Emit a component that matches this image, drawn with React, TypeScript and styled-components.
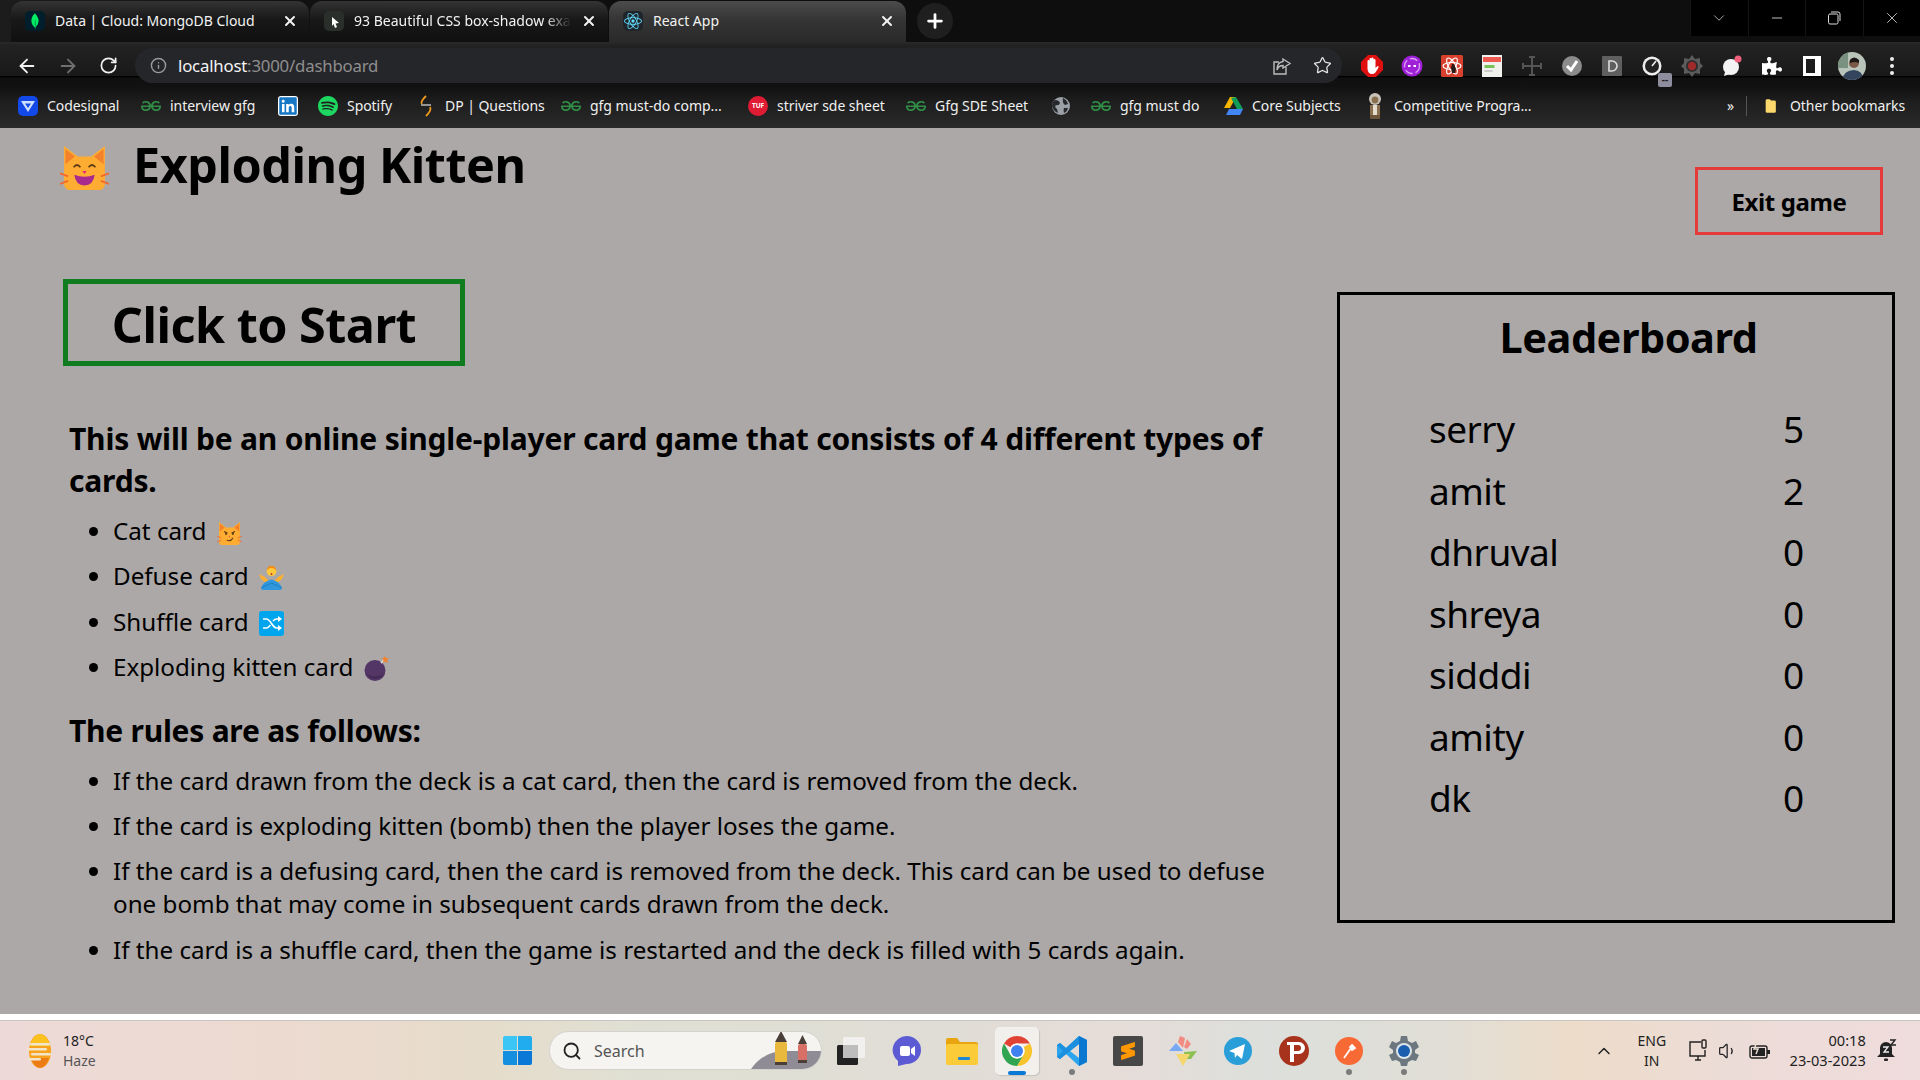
import React from "react";
import styled, { createGlobalStyle } from "styled-components";
import { ArrowLeft, ArrowRight, RotateCw, Info, Star, X, Plus, Minus, ChevronDown, ChevronUp, Search, Volume1 } from "lucide-react";
import { SiMongodb, SiReact, SiSpotify, SiGeeksforgeeks, SiSublimetext } from "react-icons/si";
import { FaLinkedin, FaPuzzlePiece } from "react-icons/fa";

const FONT = `"Noto Sans", "Open Sans", "Liberation Sans", sans-serif`;

const Global = createGlobalStyle`
  html, body { margin: 0; padding: 0; background: #aca8a7; }
  * { box-sizing: border-box; }
  body { font-family: ${FONT}; }
`;

const Screen = styled.div`
  width: 1920px; height: 1080px; overflow: hidden; display: flex; flex-direction: column;
`;

/* browser chrome */
const TabStrip = styled.div`
  height: 42px; flex: none; display: flex; align-items: flex-end; padding-left: 11px;
  background: linear-gradient(90deg, #1c1c1c, #0e0e0e 20%, #0e0e0e);
`;
const Tab = styled.div<{ $active?: boolean; $pad: number; $w: number }>`
  width: ${p => p.$w}px; height: 41px; flex: none; display: flex; align-items: center;
  padding: 0 11px 2px ${p => p.$pad}px; gap: 10px; border-radius: 12px 12px 0 0;
  color: #f2f2f2; font-size: 14px; white-space: nowrap;
  background: ${p => p.$active
    ? "linear-gradient(#4c4c4c, #353535 45%, #2a2a2a)"
    : "linear-gradient(#343434, #181818 45%, #101010)"};
  margin-right: 1px;
`;
const TabTitle = styled.span<{ $fade?: boolean }>`
  flex: 1; overflow: hidden;
  ${p => p.$fade ? "-webkit-mask-image: linear-gradient(90deg,#000 88%,transparent);" : ""}
`;
const FavBox = styled.span<{ $bg?: string }>`
  width: 20px; height: 20px; flex: none; display: flex; align-items: center; justify-content: center;
  border-radius: 5px; background: ${p => p.$bg || "transparent"};
`;
const NewTab = styled.div`
  width: 36px; height: 36px; border-radius: 50%; background: #1f1f1f; margin: 0 0 3px 10px;
  display: flex; align-items: center; justify-content: center; color: #fff;
`;
const WinControls = styled.div`
  margin-left: auto; align-self: flex-start; height: 36px; width: 230px; background: #000; display: flex;
  color: #ddd;
`;
const WinBtn = styled.div`
  flex: 1; display: flex; align-items: center; justify-content: center;
  border-left: 1px solid #141414;
`;
const Toolbar = styled.div`
  height: 43px; flex: none; display: flex; align-items: flex-start; padding-top: 6px;
  background: linear-gradient(#2a2a2a 0, #222 8%, #191919 78%, #000 79%, #000 82%, #0f0f0f 83%, #111 100%);
`;
const NavBtn = styled.div<{ $w: number; $dim?: boolean }>`
  width: ${p => p.$w}px; height: 35px; flex: none; display: flex; align-items: center; justify-content: center;
  color: ${p => p.$dim ? "#6f6f6f" : "#f1f1f1"};
`;
const AddressBar = styled.div`
  width: 1207px; height: 35px; flex: none; border-radius: 18px; background: #25262a;
  display: flex; align-items: center; padding-left: 15px; color: #9a9a9a;
`;
const Url = styled.div`
  margin-left: 11px; font-size: 16.8px; color: #8f8f8f; flex: 1; letter-spacing: -0.2px;
  b { color: #f4f4f4; font-weight: 400; }
`;
const ExtRow = styled.div`
  display: flex; margin-left: 10px;
`;
const ExtSlot = styled.div`
  width: 40px; height: 35px; flex: none; display: flex; align-items: center; justify-content: center; position: relative; color: #fff;
`;
const GaugeBadge = styled.span`
  position: absolute; right: 0; bottom: -4px; width: 14px; height: 14px; border-radius: 2px;
  background: #8d8d9d; color: #222; font-size: 10px; line-height: 12px; text-align: center; font-weight: 700;
`;
const BookmarkBar = styled.div`
  height: 43px; flex: none; display: flex; align-items: center; padding: 0 0 2px 18px; color: #f0f0f0;
  background: linear-gradient(#101010, #1e1e1e 40%, #2a2a2a);
  font-size: 14px; letter-spacing: -0.05px; white-space: nowrap;
`;
const Bookmark = styled.div<{ $w: number; $gap?: number }>`
  width: ${p => p.$w}px; flex: none; display: flex; align-items: center; gap: ${p => p.$gap ?? 9}px;
`;
const BarSep = styled.div`
  width: 1px; height: 20px; background: #555; margin: 0 18px 0 12px;
`;

/* page */
const Main = styled.div`
  height: 886px; flex: none; background: #aca8a7; color: #000; display: flex; flex-direction: column;
`;
const Header = styled.header`
  height: 107px; flex: none; display: flex; justify-content: space-between; padding: 0 37px 0 60px;
`;
const TitleRow = styled.div`
  display: flex; align-items: flex-start; gap: 24px; padding-top: 18px;
`;
const Title = styled.h1`
  margin: -15px 0 0; font-size: 48.5px; line-height: 66px; font-weight: 700; letter-spacing: -0.45px;
`;
const ExitButton = styled.button`
  margin-top: 39px; width: 188px; height: 68px; background: transparent; border: 3px solid #e53a3a;
  font: 700 24px ${FONT}; letter-spacing: -0.4px; color: #000; padding: 0;
`;
const Content = styled.div`
  flex: 1; display: flex; justify-content: space-between; padding: 0 25px 0 63px;
`;
const Left = styled.section`
  width: 1215px; padding-top: 44px;
`;
const StartButton = styled.button`
  display: block; width: 402px; height: 87px; background: transparent; border: 5px solid #0f7d1f;
  font: 700 48.5px ${FONT}; letter-spacing: -0.5px; color: #000; padding: 2px 0 0;
`;
const Intro = styled.h2`
  margin: 52px 0 0 6px; font-size: 30px; line-height: 42px; font-weight: 700; letter-spacing: -0.2px;
`;
const SubHead = styled.h3`
  margin: 20px 0 0 6px; font-size: 30px; line-height: 42px; font-weight: 700; letter-spacing: -0.25px;
`;
const List = styled.ul<{ $top?: number }>`
  margin: ${p => p.$top ?? 6}px 0 0; padding: 0 0 0 50px; font-size: 24.2px; line-height: 33px; letter-spacing: 0;
`;
const Item = styled.li`
  padding: 6px 0 6.4px;
  svg { vertical-align: -5px; margin-left: 4px; }
`;
const Board = styled.aside`
  width: 558px; height: 631px; margin-top: 57px; border: 3px solid #000; flex: none;
`;
const BoardTitle = styled.h2`
  margin: 0; padding: 12px 0 0 25px; text-align: center; font-size: 41.5px; line-height: 60px; font-weight: 700; letter-spacing: -0.5px;
`;
const Rows = styled.div`
  padding: 31px 0 0 89px;
`;
const Row = styled.div`
  display: grid; grid-template-columns: 354px auto; height: 61.5px; font-size: 37px; line-height: 61.5px; letter-spacing: -0.5px;
`;

/* taskbar */
const WhiteStrip = styled.div`
  height: 6px; flex: none; background: #fff;
`;
const Taskbar = styled.footer`
  height: 60px; flex: none; display: flex; align-items: center; color: #222;
  border-top: 1px solid #c9c5c1;
  background: linear-gradient(90deg, #eddad8 0, #ecdad0 15%, #e6dccb 25%, #dfe0d3 33%, #e0ddd6 50%, #e6dcd8 58%, #dcdfdb 66%, #e0ded6 75%, #eddcc9 82%, #ecdcd7 90%, #efdcdc 100%);
`;
const Weather = styled.div`
  width: 495px; flex: none; display: flex; align-items: center; gap: 11px; padding-left: 27px;
  font-size: 14px; line-height: 20px;
  small { font-size: 14px; color: #555; display: block; }
`;
const StartSlot = styled.div`
  width: 44px; display: flex; justify-content: center; flex: none;
`;
const SearchPill = styled.div`
  width: 273px; height: 39px; margin: 0 1.5px 0 10px; flex: none; border-radius: 20px; background: #f6f4f1;
  border: 1px solid #d5d2ce; display: flex; align-items: center; gap: 12px; padding-left: 12px;
  font-size: 16px; color: #555; position: relative; overflow: hidden;
`;
const Lanterns = styled.svg`
  position: absolute; right: 0; bottom: 0;
`;
const AppSlot = styled.div<{ $active?: boolean }>`
  width: 55.3px; height: 48px; flex: none; display: flex; align-items: center; justify-content: center; position: relative;
  ${p => p.$active ? `&::before { content: ""; position: absolute; left: 6px; right: 6px; top: 0; bottom: 0; border-radius: 5px; background: rgba(255,255,255,.55); box-shadow: 1px 1px 1px rgba(0,0,0,.12);} svg { position: relative; }` : ""}
`;
const RunDot = styled.span<{ $active?: boolean }>`
  position: absolute; bottom: 0; left: 50%; border-radius: 3px;
  width: ${p => p.$active ? "18px" : "6px"}; margin-left: ${p => p.$active ? "-9px" : "-3px"};
  background: ${p => p.$active ? "#0a79d6" : "#7b7b7b"}; height: ${p => p.$active ? "4px" : "6px"};
`;
const Tray = styled.div`
  margin-left: 159px; flex: none; display: flex; align-items: center; font-size: 14px; color: #222;
`;
const TrayIcon = styled.div<{ $w: number }>`
  width: ${p => p.$w}px; flex: none; display: flex; justify-content: center; align-items: center;
`;
const Lang = styled.div`
  width: 42px; margin: 0 13px 0 14px; text-align: center; line-height: 20px; flex: none; font-size: 14px;
`;
const Clock = styled.div`
  width: 82px; margin: -2px 0 0 9px; text-align: right; line-height: 20px; flex: none; font-size: 14.6px; white-space: nowrap;
`;

/* drawings */
const CatBase = () => (
  <>
    <path d="M3 4 L13 11 H23 L33 4 V29 a4 4 0 0 1-4 4 H7 a4 4 0 0 1-4-4Z" fill="#FFAC33" />
    <path d="M4 6 L11 11 L4 16Z M32 6 L25 11 L32 16Z" fill="#F4812B" />
    <path d="M0 22 L6 24 M0 29 L6 27 M36 22 L30 24 M36 29 L30 27" stroke="#F4662B" strokeWidth="1.1" fill="none" />
  </>
);
const GrinCat = ({ w, h }: { w: number; h: number }) => (
  <svg width={w} height={h} viewBox="0 4 36 29" preserveAspectRatio="none">
    <CatBase />
    <path d="M10 18 q2.5-3 5 0 M21 18 q2.5-3 5 0" stroke="#5C3A14" strokeWidth="1.2" fill="none" />
    <path d="M16.5 20.5h3L18 22.5Z" fill="#E5247E" />
    <path d="M10.5 23 q7.5 2.5 15 0 q-1 7-7.5 7t-7.5-7Z" fill="#A82A8F" />
  </svg>
);
const SmirkCat = () => (
  <svg width="25" height="23" viewBox="0 4 36 29" preserveAspectRatio="none">
    <CatBase />
    <path d="M10 16 l5 2 M26 16 l-5 2" stroke="#5C3A14" strokeWidth="1.5" fill="none" />
    <circle cx="13" cy="19" r="1.4" fill="#5C3A14" /><circle cx="23" cy="19" r="1.4" fill="#5C3A14" />
    <path d="M17 22h2l-1 1.4Z" fill="#E5247E" />
    <path d="M14 27 q6 2 9-3" stroke="#5C3A14" strokeWidth="1.3" fill="none" />
  </svg>
);
const Person = () => (
  <svg width="25" height="25" viewBox="0 0 36 36">
    <path d="M0 13 L8 17 L13 22 L18 25 L23 22 L28 17 L36 13 L33 20 L22 29 H14 L3 20Z" fill="#FFB02E" />
    <circle cx="18" cy="9" r="7" fill="#FFC83D" />
    <path d="M11 8 q7-8 14 0 q-1-7-7-7t-7 7Z" fill="#F08C1A" />
    <circle cx="18" cy="13" r="1.3" fill="#A52020" />
    <path d="M3 33 Q6 24 18 21 Q30 24 33 33 Q33 36 30 36 H6 Q3 36 3 33Z" fill="#2F97DD" />
    <path d="M3 33 L18 26 L33 33" stroke="#1E78B8" strokeWidth="1.2" fill="none" />
  </svg>
);
const ShuffleEmoji = () => (
  <svg width="25" height="25" viewBox="0 0 25 25">
    <rect width="25" height="25" rx="3" fill="#00A6ED" />
    <path d="M4 8 h3.5 c4 0 6 9 10 9 h2 M4 17 h3.5 c1.5 0 3-2 3.8-3 M14 10 c1-1 2-2 3.5-2 h2" stroke="#fff" strokeWidth="1.7" fill="none" />
    <path d="M19 5 L23 8 L19 11Z M19 14 L23 17 L19 20Z" fill="#fff" />
  </svg>
);
const Bomb = () => (
  <svg width="25" height="25" viewBox="0 0 25 25">
    <circle cx="11" cy="14.5" r="10.5" fill="#533566" />
    <path d="M2 17 a10 10 0 0 0 18 0 a11 8 0 0 1-18 0Z" fill="#432A52" />
    <path d="M17 7 L20 4" stroke="#D6D6D6" strokeWidth="2" />
    <path d="M21 0 L22 2 L25 2 L23 4 L24 7 L21 5.5 L19 7 L19.5 4 L17.5 2 L20 2Z" fill="#F4812B" />
  </svg>
);
const Gfg = () => <SiGeeksforgeeks size={20} color="#2f8d46" />;
const Codesignal = () => (
  <FavBox $bg="#1249E8"><svg width="14" height="14" viewBox="0 0 14 14"><path d="M0 2 H14 L7 13Z M4 4.5 L7 9 L10 4.5Z" fill="#cfe0ff" fillRule="evenodd" /></svg></FavBox>
);
const Globe = () => (
  <svg width="20" height="20" viewBox="0 0 20 20"><circle cx="10" cy="10" r="9" fill="#9aa0a6" /><path d="M4 4 q4 0 5 3 q-1 3-4 2 q-2 2 1 4 l1 4 q-5-2-6-7 q0-4 3-6Z M12 2 q4 2 5 6 l-3 1 q-3-2-2-7Z M13 12 h4 q-1 4-4 5 q-1-3 0-5Z" fill="#26282c" /></svg>
);
const Drive = () => (
  <svg width="20" height="18" viewBox="0 0 20 18"><path d="M7 0 H13 L7 11 H1Z" fill="#F4B400" /><path d="M13 0 L20 12 H14 L8 1Z" fill="#0F9D58" /><path d="M6 12 H20 L17 18 H3Z" fill="#4285F4" /></svg>
);
const Doc = () => (
  <svg width="20" height="26" viewBox="0 0 20 26"><circle cx="10" cy="6" r="6" fill="#c9c2b8" /><circle cx="10" cy="7" r="3.4" fill="#8a6f4e" /><rect x="5" y="12" width="10" height="10" fill="#8a6f4e" /><rect x="8" y="12" width="4" height="10" fill="#e3dccf" /><rect x="5" y="22" width="10" height="4" fill="#6d563b" /></svg>
);
const DpIcon = () => (
  <svg width="20" height="24" viewBox="0 0 18 24"><path d="M4 11 H14" stroke="#c9c9c9" strokeWidth="1.4" fill="none" /><path d="M9 2 Q3 8 5 10 M9 22 Q15 16 13 13" stroke="#f09a1a" strokeWidth="1.8" fill="none" /></svg>
);
const StriverDisc = styled.span`
  width: 20px; height: 20px; border-radius: 50%; background: #E01B34; color: #fff; flex: none;
  font: 700 6.5px/20px ${FONT}; text-align: center; letter-spacing: 0;
`;
const Folder = () => (
  <svg width="16" height="20" viewBox="0 0 16 20"><path d="M1 2 a2 2 0 0 1 2-2 h4 l2 2 h5 a2 2 0 0 1 2 2 v14 a2 2 0 0 1-2 2 H3 a2 2 0 0 1-2-2Z" fill="#FCD76B" /></svg>
);
const Share = () => (
  <svg width="20" height="20" viewBox="0 0 20 20" fill="none" stroke="#bdbdbd" strokeWidth="1.4"><path d="M14 11 V18 H2 V6 H7" /><path d="M11 3 L18 7.5 L11 12 V9.5 C8 9.5 6 11 5 14 C5 9 7.5 6 11 5.5Z" /></svg>
);
const StopHand = () => (
  <svg width="22" height="22" viewBox="0 0 22 22"><path d="M7 0 H15 L22 7 V15 L15 22 H7 L0 15 V7Z" fill="#E01010" /><path d="M6.5 10 V6 a1 1 0 0 1 2 0 V4 a1 1 0 0 1 2 0 V3.6 a1 1 0 0 1 2 0 V5 a1 1 0 0 1 2 0 V13 l2-2 q1.5 0 1 1.5 l-3 5 Q13 19 11 19 Q7 19 6.5 14Z" fill="#fff" /></svg>
);
const PurpleExt = () => (
  <svg width="22" height="22" viewBox="0 0 22 22"><circle cx="11" cy="11" r="10.5" fill="#A020D8" /><circle cx="11" cy="11" r="7.5" fill="none" stroke="#d9a0f2" strokeWidth="1.3" strokeDasharray="8 3" /><rect x="7" y="10" width="2.5" height="2" fill="#fff" /><rect x="12.5" y="10" width="2.5" height="2" fill="#fff" /></svg>
);
const ReactExt = () => (
  <svg width="22" height="22" viewBox="0 0 22 22"><rect width="22" height="22" rx="1.5" fill="#D9402E" /><g fill="none" stroke="#fff" strokeWidth="1.2"><ellipse cx="11" cy="11" rx="9" ry="3.5" /><ellipse cx="11" cy="11" rx="9" ry="3.5" transform="rotate(60 11 11)" /><ellipse cx="11" cy="11" rx="9" ry="3.5" transform="rotate(120 11 11)" /></g><path d="M11 9 l2 0 l2 5 l-1 4 h-3 l-1-5Z" fill="#2a1a18" /></svg>
);
const NoteExt = () => (
  <svg width="20" height="22" viewBox="0 0 20 22"><rect width="20" height="22" fill="#f1f1ee" /><rect x="1" y="2" width="18" height="5" fill="#EE5A4F" /><rect x="2.5" y="10" width="10" height="3" fill="#78C257" /><rect x="2.5" y="15" width="8" height="2" fill="#ccc" /></svg>
);
const CrossExt = () => (
  <svg width="22" height="22" viewBox="0 0 22 22" stroke="#555" strokeWidth="2" fill="none"><path d="M11 2 V20 M2 11 H20 M8 2 H14 M8 20 H14 M2 8 V14 M20 8 V14" /></svg>
);
const CheckExt = () => (
  <svg width="22" height="22" viewBox="0 0 22 22"><circle cx="11" cy="11" r="10" fill="#8b8b8b" /><path d="M6 11 L10 15 L16 6" stroke="#fff" strokeWidth="3" fill="none" /></svg>
);
const DExt = () => (
  <svg width="20" height="20" viewBox="0 0 20 20"><rect width="20" height="20" rx="1" fill="#5f5f5f" /><path d="M7 5 H10 a5 5 0 0 1 0 10 H7Z" fill="none" stroke="#ddd" strokeWidth="1.6" /></svg>
);
const Gauge = () => (
  <svg width="22" height="22" viewBox="0 0 22 22"><circle cx="11" cy="11" r="9.5" fill="#eee" /><circle cx="11" cy="11" r="7" fill="#222" /><path d="M11 11 L15 6" stroke="#eee" strokeWidth="1.6" /></svg>
);
const GearExt = () => (
  <svg width="24" height="24" viewBox="0 0 24 24"><path d="M12 1 L15 5 L20 4 L20 9 L23 12 L20 15 L20 20 L15 19 L12 23 L9 19 L4 20 L4 15 L1 12 L4 9 L4 4 L9 5Z" fill="#5b5b5b" /><circle cx="12" cy="12" r="6" fill="#2e2e2e" /><circle cx="12" cy="12" r="4.2" fill="#9e2a2a" /></svg>
);
const ChatExt = () => (
  <svg width="22" height="22" viewBox="0 0 22 22"><circle cx="10" cy="12" r="8" fill="#f3f3f3" /><path d="M4 17 L3 21 L9 19Z" fill="#f3f3f3" /><circle cx="17" cy="4" r="3.5" fill="#F0607A" /></svg>
);
const SidePanel = () => (
  <svg width="18" height="20" viewBox="0 0 18 20"><path d="M0 0 H18 V20 H0Z M3 3 V17 H12 V3Z" fill="#fff" fillRule="evenodd" /></svg>
);
const Avatar = () => (
  <svg width="28" height="28" viewBox="0 0 28 28"><defs><clipPath id="avc"><circle cx="14" cy="14" r="14" /></clipPath></defs><g clipPath="url(#avc)"><rect width="28" height="28" fill="#b9c4bb" /><rect x="0" y="0" width="10" height="16" fill="#7b9180" /><circle cx="16" cy="11" r="5" fill="#7a5a46" /><path d="M12 8 q4-5 9 0 l0 3 q-4-2-9 0Z" fill="#1c1814" /><path d="M4 28 q2-10 12-10 q8 0 10 10Z" fill="#33465e" /></g></svg>
);
const Sun = () => (
  <svg width="25" height="36" viewBox="0 0 25 36"><ellipse cx="13" cy="18" rx="11" ry="17" fill="#F9A21B" /><path d="M13 1 a11 17 0 0 1 10 12 H3 A11 17 0 0 1 13 1Z" fill="#FBC21F" /><path d="M13 35 a11 17 0 0 0 9-10 H4 a11 17 0 0 0 9 10Z" fill="#EE7C14" /><g fill="#F1E6CB"><rect x="3" y="10" width="20" height="2.6" rx="1.3" /><rect x="0" y="15" width="20" height="2.6" rx="1.3" /><rect x="4" y="20" width="20" height="2.6" rx="1.3" /><rect x="1" y="25" width="13" height="2.6" rx="1.3" /></g></svg>
);
const Windows = () => (
  <svg width="29" height="29" viewBox="0 0 29 29"><path d="M0 2 a2 2 0 0 1 2-2 H14 V14 H0Z" fill="#3BC6F6" /><path d="M15 0 H27 a2 2 0 0 1 2 2 V14 H15Z" fill="#20ACEE" /><path d="M0 15 H14 V29 H2 a2 2 0 0 1-2-2Z" fill="#148FE0" /><path d="M15 15 H29 V27 a2 2 0 0 1-2 2 H15Z" fill="#0A78D6" /></svg>
);
const TaskView = () => (
  <svg width="30" height="30" viewBox="0 0 30 30"><rect x="1" y="9" width="21" height="20" rx="1.5" fill="#222" /><rect x="7" y="1" width="22" height="21" rx="1.5" fill="#f4f4f4" opacity=".82" /><rect x="7" y="9" width="15" height="13" fill="#bdbdbd" /></svg>
);
const Meet = () => (
  <svg width="29" height="30" viewBox="0 0 29 30"><path d="M14.5 0 a14.5 14 0 0 1 14.5 14 a14.5 14 0 0 1-14.5 14 L6 30 V25 A14 14 0 0 1 14.5 0Z" fill="#5D5BD4" /><rect x="8" y="10" width="10" height="10" rx="2" fill="#fff" /><path d="M19 13 L23 10 V20 L19 17Z" fill="#fff" /></svg>
);
const Explorer = () => (
  <svg width="32" height="28" viewBox="0 0 32 28"><path d="M0 3 a2 2 0 0 1 2-2 h9 l3 4 h16 a2 2 0 0 1 2 2 V10 H0Z" fill="#E8A50F" /><rect y="7" width="32" height="21" rx="2" fill="#FBCB3A" /><rect x="12" y="20" width="12" height="3" rx="1" fill="#1E88D8" /></svg>
);
const Chrome = () => (
  <svg width="30" height="30" viewBox="0 0 30 30">
    <path d="M15 0 A15 15 0 0 1 28 7.5 H15 A7.5 7.5 0 0 0 8.5 11.2 L2 7.5 A15 15 0 0 1 15 0Z" fill="#E04334" />
    <path d="M28 7.5 A15 15 0 0 1 15 30 L21.5 18.7 A7.5 7.5 0 0 0 21.5 11 Z" fill="#F8C42E" />
    <path d="M2 7.5 L8.5 18.7 A7.5 7.5 0 0 0 21.5 18.7 L15 30 A15 15 0 0 1 2 7.5Z" fill="#2FA551" />
    <circle cx="15" cy="15" r="7.6" fill="#fff" /><circle cx="15" cy="15" r="6" fill="#3E82F1" />
  </svg>
);
const VsCode = () => (
  <svg width="32" height="32" viewBox="0 0 32 32"><path d="M23 1 L31 5 V27 L23 31 L10 19 L4 24 L1 22 V10 L4 8 L10 13Z M23 9 L14 16 L23 23Z" fill="#2AA5EE" fillRule="evenodd" /><path d="M23 1 L31 5 V27 L23 31Z" fill="#0A78D0" /><path d="M1 22 L4 24 L23 9 V1 L10 13 L4 8 L1 10 L7 16Z" fill="#1C8FDE" /></svg>
);
const SublimeIcon = () => (
  <svg width="30" height="30" viewBox="0 0 30 30"><rect width="30" height="30" rx="2" fill="#474747" /><g transform="translate(6,6) scale(.75)"><SiSublimetext size={24} color="#FF9800" /></g></svg>
);
const Gem = () => (
  <svg width="30" height="30" viewBox="0 0 30 30"><path d="M15 15 L1 15 L8 7Z" fill="#78A9F5" /><path d="M16 16 L29 15 L23 23 L17 23Z" fill="#8CC152" /><path d="M8 18 H22 L15 30Z" fill="#F5D76E" /><path d="M12 0 L17 2 L15 12 L10 6Z" fill="#F28B82" /><path d="M19 3 L23 8 L19 13 L16 11Z" fill="#F28B82" /></svg>
);
const Telegram = () => (
  <svg width="28" height="28" viewBox="0 0 28 28"><circle cx="14" cy="14" r="14" fill="#2A9ED8" /><path d="M5 14 L21 7 L18 22 L13 18 L11 21 L10.5 16Z" fill="#fff" /></svg>
);
const Psiphon = () => (
  <svg width="30" height="30" viewBox="0 0 30 30"><circle cx="15" cy="15" r="15" fill="#A8331C" /><path d="M8 6 H20 a5 5 0 0 1 0 12 H15 V26 H11 V9 H8Z M15 9 V15 H19 a3 3 0 0 0 0-6Z" fill="#fff" fillRule="evenodd" /></svg>
);
const Postman = () => (
  <svg width="28" height="28" viewBox="0 0 28 28"><circle cx="14" cy="14" r="14" fill="#F76935" /><path d="M9 21 L16 11 M17 8 l3 3 l-3 2 l-2-3Z" stroke="#fff" strokeWidth="1.8" fill="#fff" /></svg>
);
const SettingsIcon = () => (
  <svg width="32" height="32" viewBox="0 0 32 32"><path d="M13 1 H19 L20 6 L24 8 L28 6 L31 12 L27 15 V18 L31 20 L28 26 L24 25 L20 27 L19 31 H13 L12 27 L8 25 L4 26 L1 20 L5 18 V15 L1 12 L4 6 L8 8 L12 6Z" fill="#6C7780" /><circle cx="16" cy="16" r="8" fill="#DDE4EA" /><circle cx="16" cy="16" r="6" fill="#1A5FAF" /></svg>
);
const Monitor = () => (
  <svg width="20" height="24" viewBox="0 0 20 24" fill="none" stroke="#222" strokeWidth="1.4"><path d="M12 3 H1 V17 H16 V11" /><path d="M6 21 H12 M9 17 V21" /><rect x="13" y="1" width="4" height="8" rx="1" /></svg>
);
const Battery = () => (
  <svg width="22" height="20" viewBox="0 0 22 20"><rect x="1" y="5" width="17" height="12" rx="2" fill="none" stroke="#222" strokeWidth="1.4" /><rect x="3" y="7" width="13" height="8" fill="#222" /><rect x="18" y="9" width="3" height="4" fill="#222" /><path d="M8 1 L5 8 H9 L7 13" stroke="#e8dccf" strokeWidth="1.5" fill="none" /></svg>
);
const Bell = () => (
  <svg width="20" height="24" viewBox="0 0 20 24"><path d="M9 3 a6 6 0 0 1 6 6 V15 L18 18 H0 L3 15 V9 a6 6 0 0 1 6-6Z" fill="#222" /><rect x="7" y="19.5" width="4" height="2.5" rx="1" fill="#222" /><path d="M13 1 H18 L14 6 H19" stroke="#222" strokeWidth="1.4" fill="none" /><path d="M6 8 H11 L7 13 H12" stroke="#eee" strokeWidth="1.3" fill="none" /></svg>
);

const bookmarks: { w: number; icon: React.ReactNode; label?: string }[] = [
  { w: 123, icon: <Codesignal />, label: "Codesignal" },
  { w: 137, icon: <Gfg />, label: "interview gfg" },
  { w: 40, icon: <FaLinkedin size={20} color="#1677C5" style={{ background: "#fff", borderRadius: 3 }} /> },
  { w: 98, icon: <SiSpotify size={20} color="#1ED760" />, label: "Spotify" },
  { w: 145, icon: <DpIcon />, label: "DP | Questions" },
  { w: 187, icon: <Gfg />, label: "gfg must-do comp..." },
  { w: 158, icon: <StriverDisc>TUF</StriverDisc>, label: "striver sde sheet" },
  { w: 145, icon: <Gfg />, label: "Gfg SDE Sheet" },
  { w: 40, icon: <Globe /> },
  { w: 132, icon: <Gfg />, label: "gfg must do" },
  { w: 142, icon: <Drive />, label: "Core Subjects" },
  { w: 362, icon: <Doc />, label: "Competitive Progra..." },
];

const leaders: [string, number][] = [
  ["serry", 5], ["amit", 2], ["dhruval", 0], ["shreya", 0], ["sidddi", 0], ["amity", 0], ["dk", 0],
];

export default function App() {
  return (
    <Screen>
      <Global />
      <TabStrip>
        <Tab $w={298} $pad={14}>
          <FavBox $bg="#001E2B"><SiMongodb size={16} color="#00ED64" /></FavBox>
          <TabTitle>Data | Cloud: MongoDB Cloud</TabTitle>
          <X size={16} strokeWidth={3} />
        </Tab>
        <Tab $w={298} $pad={14}>
          <FavBox $bg="#2a2f2c"><svg width="14" height="16" viewBox="0 0 14 16"><path d="M5 4 L12 10 L8.5 10.5 L10 14 L8 15 L6.5 11 L5 13Z" fill="#fff" /></svg></FavBox>
          <TabTitle $fade>93 Beautiful CSS box-shadow exa</TabTitle>
          <X size={16} strokeWidth={3} />
        </Tab>
        <Tab $active $w={297} $pad={14}>
          <FavBox $bg="#20252b"><SiReact size={18} color="#61DAFB" /></FavBox>
          <TabTitle>React App</TabTitle>
          <X size={16} strokeWidth={3} />
        </Tab>
        <NewTab><Plus size={22} strokeWidth={3} /></NewTab>
        <WinControls>
          <WinBtn><ChevronDown size={18} strokeWidth={1} /></WinBtn>
          <WinBtn><Minus size={16} strokeWidth={1.3} /></WinBtn>
          <WinBtn><svg width="14" height="14" viewBox="0 0 14 14" fill="none" stroke="#ddd"><rect x="1.5" y="3" width="9.5" height="10" rx="1.5" /><path d="M4 1 H11 a2 2 0 0 1 2 2 V10" /></svg></WinBtn>
          <WinBtn><X size={18} strokeWidth={1.1} /></WinBtn>
        </WinControls>
      </TabStrip>
      <Toolbar>
        <NavBtn $w={54}><ArrowLeft size={22} strokeWidth={2} /></NavBtn>
        <NavBtn $w={27} $dim><ArrowRight size={22} strokeWidth={2} /></NavBtn>
        <NavBtn $w={54}><RotateCw size={19} strokeWidth={2.2} /></NavBtn>
        <AddressBar>
          <Info size={17} strokeWidth={2} />
          <Url><b>localhost</b>:3000/dashboard</Url>
          <ExtSlot><Share /></ExtSlot>
          <ExtSlot><Star size={19} strokeWidth={1.6} color="#e6e6e6" /></ExtSlot>
        </AddressBar>
        <ExtRow>
          <ExtSlot><StopHand /></ExtSlot>
          <ExtSlot><PurpleExt /></ExtSlot>
          <ExtSlot><ReactExt /></ExtSlot>
          <ExtSlot><NoteExt /></ExtSlot>
          <ExtSlot><CrossExt /></ExtSlot>
          <ExtSlot><CheckExt /></ExtSlot>
          <ExtSlot><DExt /></ExtSlot>
          <ExtSlot><Gauge /><GaugeBadge>--</GaugeBadge></ExtSlot>
          <ExtSlot><GearExt /></ExtSlot>
          <ExtSlot><ChatExt /></ExtSlot>
          <ExtSlot><FaPuzzlePiece size={20} /></ExtSlot>
          <ExtSlot><SidePanel /></ExtSlot>
          <ExtSlot><Avatar /></ExtSlot>
          <ExtSlot><svg width="4" height="18" viewBox="0 0 4 18" fill="#eee"><circle cx="2" cy="2" r="2" /><circle cx="2" cy="9" r="2" /><circle cx="2" cy="16" r="2" /></svg></ExtSlot>
        </ExtRow>
      </Toolbar>
      <BookmarkBar>
        {bookmarks.map((b, i) => (
          <Bookmark key={i} $w={b.w}>{b.icon}{b.label && <span>{b.label}</span>}</Bookmark>
        ))}
        <span>»</span>
        <BarSep />
        <Bookmark $w={140} $gap={14}><Folder /><span>Other bookmarks</span></Bookmark>
      </BookmarkBar>

      <Main>
        <Header>
          <TitleRow>
            <GrinCat w={49} h={44} />
            <Title>Exploding Kitten</Title>
          </TitleRow>
          <ExitButton>Exit game</ExitButton>
        </Header>
        <Content>
          <Left>
            <StartButton>Click to Start</StartButton>
            <Intro>This will be an online single-player card game that consists of 4 different types of cards.</Intro>
            <List $top={6}>
              <Item>Cat card <SmirkCat /></Item>
              <Item>Defuse card <Person /></Item>
              <Item>Shuffle card <ShuffleEmoji /></Item>
              <Item>Exploding kitten card <Bomb /></Item>
            </List>
            <SubHead>The rules are as follows:</SubHead>
            <List>
              <Item>If the card drawn from the deck is a cat card, then the card is removed from the deck.</Item>
              <Item>If the card is exploding kitten (bomb) then the player loses the game.</Item>
              <Item>If the card is a defusing card, then the card is removed from the deck. This card can be used to defuse one bomb that may come in subsequent cards drawn from the deck.</Item>
              <Item>If the card is a shuffle card, then the game is restarted and the deck is filled with 5 cards again.</Item>
            </List>
          </Left>
          <Board>
            <BoardTitle>Leaderboard</BoardTitle>
            <Rows>
              {leaders.map(([n, s]) => <Row key={n}><span>{n}</span><span>{s}</span></Row>)}
            </Rows>
          </Board>
        </Content>
      </Main>
      <WhiteStrip />
      <Taskbar>
        <Weather>
          <Sun />
          <div>18°C<small>Haze</small></div>
        </Weather>
        <StartSlot><Windows /></StartSlot>
        <SearchPill>
          <Search size={20} strokeWidth={2.2} color="#222" />
          Search
          <Lanterns width="70" height="39" viewBox="0 0 70 39">
            <path d="M0 39 Q12 22 32 21 H70 V39Z" fill="#8f8c96" />
            <rect x="24" y="12" width="12" height="22" rx="2" fill="#E8B93C" /><path d="M24 12 L30 1 L36 12Z" fill="#4a3f38" /><rect x="24" y="32" width="12" height="3" fill="#4a3f38" />
            <rect x="47" y="14" width="9" height="17" rx="2" fill="#D87067" /><path d="M47 14 L51.5 5 L56 14Z" fill="#4a3f38" /><rect x="47" y="30" width="9" height="3" fill="#4a3f38" />
          </Lanterns>
        </SearchPill>
        <AppSlot><TaskView /></AppSlot>
        <AppSlot><Meet /></AppSlot>
        <AppSlot><Explorer /></AppSlot>
        <AppSlot $active><Chrome /><RunDot $active /></AppSlot>
        <AppSlot><VsCode /><RunDot /></AppSlot>
        <AppSlot><SublimeIcon /></AppSlot>
        <AppSlot><Gem /></AppSlot>
        <AppSlot><Telegram /></AppSlot>
        <AppSlot><Psiphon /></AppSlot>
        <AppSlot><Postman /><RunDot /></AppSlot>
        <AppSlot><SettingsIcon /><RunDot /></AppSlot>
        <Tray>
          <TrayIcon $w={26}><ChevronUp size={20} strokeWidth={1.8} /></TrayIcon>
          <Lang>ENG<br />IN</Lang>
          <TrayIcon $w={26}><Monitor /></TrayIcon>
          <TrayIcon $w={33}><Volume1 size={20} strokeWidth={1.5} /></TrayIcon>
          <TrayIcon $w={30}><Battery /></TrayIcon>
          <Clock>00:18<br />23-03-2023</Clock>
          <TrayIcon $w={42}><Bell /></TrayIcon>
        </Tray>
      </Taskbar>
    </Screen>
  );
}
